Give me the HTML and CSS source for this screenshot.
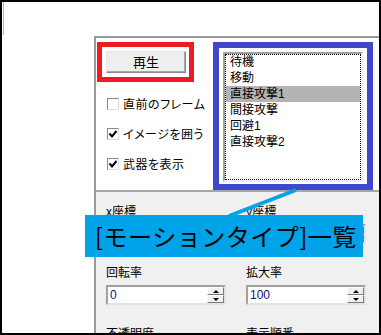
FILE: index.html
```html
<!DOCTYPE html>
<html lang="ja">
<head>
    <meta charset="UTF-8">
    <title>モーション</title>
    <link rel="stylesheet" href="styles.css">
</head>
<body>
    <div class="screen">
        <div class="top-strip"><div class="stub"></div></div>

        <div class="workspace">
            <div class="left-gap"></div>

            <div class="panel">
                <div class="panel-top">
                    <div class="controls">
                        <div class="mark-red">
                            <button class="play-btn">再生</button>
                        </div>
                        <div class="checks">
                            <label class="check-row"><span class="checkbox"></span>直前のフレーム</label>
                            <label class="check-row">
                                <span class="checkbox"><svg viewBox="0 0 10 10" width="10" height="10"><path d="M1.5 4.5 L4 7.5 L8.5 2" fill="none" stroke="#000" stroke-width="2"/></svg></span>イメージを囲う
                            </label>
                            <label class="check-row">
                                <span class="checkbox"><svg viewBox="0 0 10 10" width="10" height="10"><path d="M1.5 4.5 L4 7.5 L8.5 2" fill="none" stroke="#000" stroke-width="2"/></svg></span>武器を表示
                            </label>
                        </div>
                    </div>

                    <div class="mark-blue">
                        <div class="listbox">
                            <div class="list-inner">
                                <div class="list-item">待機</div>
                                <div class="list-item">移動</div>
                                <div class="list-item selected">直接攻撃1</div>
                                <div class="list-item">間接攻撃</div>
                                <div class="list-item">回避1</div>
                                <div class="list-item">直接攻撃2</div>
                            </div>
                        </div>
                    </div>
                </div>

                <div class="panel-bottom">
                    <div class="field">
                        <div class="field-label">x座標</div>
                        <div class="spin"><span class="spin-value">0</span><span class="spin-btns"><span class="spin-up"></span><span class="spin-down"></span></span></div>
                    </div>
                    <div class="field">
                        <div class="field-label">y座標</div>
                        <div class="spin"><span class="spin-value">0</span><span class="spin-btns"><span class="spin-up"></span><span class="spin-down"></span></span></div>
                    </div>
                    <div class="field">
                        <div class="field-label">回転率</div>
                        <div class="spin"><span class="spin-value">0</span><span class="spin-btns"><span class="spin-up"></span><span class="spin-down"></span></span></div>
                    </div>
                    <div class="field">
                        <div class="field-label">拡大率</div>
                        <div class="spin"><span class="spin-value">100</span><span class="spin-btns"><span class="spin-up"></span><span class="spin-down"></span></span></div>
                    </div>
                    <div class="field">
                        <div class="field-label">不透明度</div>
                    </div>
                    <div class="field">
                        <div class="field-label">表示順番</div>
                    </div>
                </div>
            </div>
        </div>

        <!-- 注釈 -->
        <svg class="callout-line" width="381" height="335" viewBox="0 0 381 335">
            <line x1="296" y1="190" x2="229" y2="216" stroke="#00a2e8" stroke-width="4"/>
        </svg>
        <div class="callout">[モーションタイプ]一覧</div>
    </div>
</body>
</html>
```

FILE: styles.css
```css
* {
    margin: 0;
    padding: 0;
    box-sizing: border-box;
}

body {
    font-family: 'Liberation Sans', 'Noto Sans CJK JP', sans-serif;
    font-size: 12px;
    color: #000;
    background: #fff;
    font-feature-settings: "palt";
}

.screen {
    position: relative;
    width: 381px;
    height: 335px;
    border: 2px solid #000;
    overflow: hidden;
    background: #fff;
}

.top-strip {
    height: 34px;
}

.stub {
    width: 2px;
    height: 33px;
    border-right: 1px solid #b4b4b4;
    border-bottom: 1px solid #d8d8d8;
}

.workspace {
    display: flex;
    height: 297px;
}

.left-gap {
    width: 92px;
    flex-shrink: 0;
}

.panel {
    flex: 1;
    border-left: 2px solid #9a9a9a;
    border-top: 2px solid #9a9a9a;
    display: flex;
    flex-direction: column;
}

.panel-top {
    height: 154px;
    display: flex;
    padding: 4px 0 0 1px;
    background: #fff;
}

.controls {
    width: 116px;
    flex-shrink: 0;
}

.mark-red {
    width: 97px;
    border: 5px solid #ed1c24;
    padding: 4px 3px 4px 4px;
}

.play-btn {
    display: block;
    width: 80px;
    height: 22px;
    background: #efefef;
    border: 1px solid;
    border-color: #e6e6e6 #8a8a8a #8a8a8a #e6e6e6;
    box-shadow: inset -1px -1px 0 #a8a8a8;
    font-family: 'Noto Sans CJK JP', sans-serif;
    font-size: 13px;
    line-height: 18px;
    color: #000;
}

.checks {
    display: flex;
    flex-direction: column;
    gap: 13px;
    margin-top: 13px;
    padding-left: 10px;
}

.check-row {
    display: flex;
    align-items: center;
    gap: 4px;
    height: 17px;
    white-space: nowrap;
    font-family: 'Noto Sans CJK JP', sans-serif;
    font-size: 12px;
    letter-spacing: 0.5px;
}

.checkbox {
    width: 12px;
    height: 12px;
    flex-shrink: 0;
    background: #fff;
    border: 1px solid;
    border-color: #8a8a8a #dcdcdc #dcdcdc #8a8a8a;
    display: flex;
    align-items: center;
    justify-content: center;
}

.mark-blue {
    width: 160px;
    border: 6px solid #3f48cc;
    padding: 4px 4px 2px;
    background: #fff;
}

.listbox {
    height: 130px;
    border: 2px solid;
    border-color: #a0a0a0 #f0f0f0 #f0f0f0 #a0a0a0;
    background: #fff;
}

.list-inner {
    height: 100%;
    outline: 1px dotted #000;
    outline-offset: -1px;
    padding: 0 1px;
}

.list-item {
    height: 16px;
    line-height: 16px;
    padding-left: 4px;
    font-size: 12px;
}

.list-item.selected {
    background: #b4b4b4;
}

.panel-bottom {
    flex: 1;
    background: #f0f0f0;
    border-top: 2px solid #a6a6a6;
    padding: 12px 0 0 10px;
    display: grid;
    grid-template-columns: 120px 120px;
    column-gap: 20px;
    row-gap: 21px;
    align-content: start;
}

.field-label {
    line-height: 14px;
    margin-bottom: 6px;
    font-family: 'Noto Sans CJK JP', sans-serif;
}

.spin {
    display: flex;
    width: 120px;
    height: 20px;
    background: #fff;
    border: 2px solid;
    border-color: #a0a0a0 #e3e3e3 #e3e3e3 #a0a0a0;
}

.spin-value {
    flex: 1;
    line-height: 16px;
    padding-left: 2px;
    color: #10107a;
}

.spin-btns {
    width: 17px;
    display: flex;
    flex-direction: column;
}

.spin-up,
.spin-down {
    height: 8px;
    background: #f0f0f0;
    border: 1px solid;
    border-color: #fff #7a7a7a #7a7a7a #fff;
    display: flex;
    align-items: center;
    justify-content: center;
}

.spin-up::after {
    content: "";
    border-left: 3px solid transparent;
    border-right: 3px solid transparent;
    border-bottom: 3px solid #000;
}

.spin-down::after {
    content: "";
    border-left: 3px solid transparent;
    border-right: 3px solid transparent;
    border-top: 3px solid #000;
}

.callout-line {
    position: absolute;
    left: -2px;
    top: -2px;
}

.callout {
    position: absolute;
    left: 83px;
    top: 213px;
    width: 278px;
    height: 42px;
    background: #00a2e8;
    padding-left: 10px;
    font-family: 'Noto Sans CJK JP', sans-serif;
    font-size: 24px;
    line-height: 42px;
    letter-spacing: 0.5px;
    font-feature-settings: normal;
    white-space: nowrap;
}
```
